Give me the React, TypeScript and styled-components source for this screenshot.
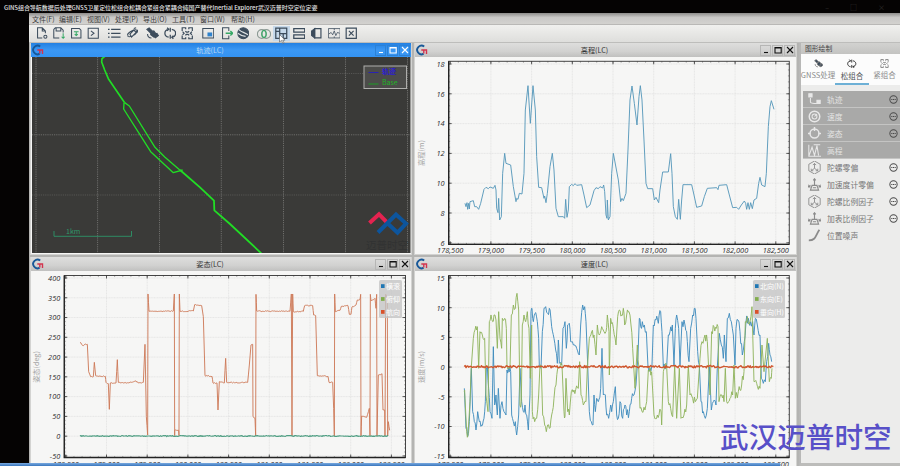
import React from 'react';
import styled, { createGlobalStyle } from 'styled-components';

const sans = `"Noto Sans CJK SC", "Noto Sans", sans-serif`;

const Global = createGlobalStyle`
  * { box-sizing: border-box; }
  body { margin: 0; background: #050505; font-family: ${sans}; overflow: hidden; }
  svg { display: block; }
`;

const Screen = styled.div`
  width: 900px; height: 466px; background: #050303; overflow: hidden; position: relative;
  display: flex; flex-direction: column;
`;
const TitleBar = styled.header`
  height: 13px; flex: none; display: flex; justify-content: space-between;
  padding: 3px 15px 0 4px; color: #e2e2e2; font-size: 6px; line-height: 9px; white-space: nowrap;
`;
const Caption = styled.span`letter-spacing: -0.04px; font-weight: 500;`;
const CaptionButtons = styled.span`display: flex; gap: 21px; color: #33302f; font-size: 7px;`;
const AppShell = styled.div`
  margin-left: 29px; width: 871px; height: 453px; background: #ececea;
  display: grid; grid-template-rows: 12px 18px 423px;
`;
const MenuBar = styled.nav`
  background: linear-gradient(#8d8c8a, #c9c8c6 40%, #d3d2cf); border-bottom: 1px solid #b9b8b6;
  display: flex; padding-left: 3px; font-size: 7px; line-height: 12px; color: #3b3b3b;
`;
const MenuItem = styled.span<{ $w: number }>`width: ${p => p.$w}px; white-space: nowrap;`;
const ToolBar = styled.div`
  background: linear-gradient(#f0f0ee, #dededc); border-bottom: 1px solid #bdbdbb;
  display: flex; align-items: center; padding-left: 4.5px;
`;
const Tool = styled.span<{ $gap?: number; $active?: boolean }>`
  width: 17.5px; height: 15px; margin-left: ${p => p.$gap ?? 0}px; display: grid; place-items: center;
  background: ${p => (p.$active ? '#c5d8ea' : 'transparent')};
`;
const Main = styled.div`display: grid; grid-template-columns: 770px 101px;`;
const Desktop = styled.div`
  background: #b4b4b2; display: grid; grid-template-columns: 382px 383px; grid-template-rows: 212px 211px;
  column-gap: 2px; row-gap: 2px; padding-left: 1px; height: 423px; overflow: hidden;
`;
const Win = styled.section`
  background: #f6f6f5; border: 1px solid #d3d3d1; border-top: 0; overflow: hidden;
  display: flex; flex-direction: column;
`;
const WinBar = styled.div<{ $active?: boolean }>`
  height: 14px; flex: none; display: grid; grid-template-columns: 14px 1fr 36px; align-items: center;
  background: ${p => (p.$active ? 'linear-gradient(#2380e2, #3b98f4 50%, #3493f2)' : 'linear-gradient(#dededd, #d1d1d0 60%, #c0c0bf)')};
  color: ${p => (p.$active ? '#b9d8f4' : '#333')}; font-size: 7.2px; line-height: 13px;
`;
const WinTitle = styled.span`text-align: center;`;
const WinButtons = styled.span`display: flex; gap: 1px;`;
const WinButton = styled.span<{ $active?: boolean }>`
  width: 11px; height: 11px; display: grid; place-items: center;
  border: 1px solid ${p => (p.$active ? '#2c81d6' : '#b6b6b5')}; color: ${p => (p.$active ? '#fff' : '#111')};
`;
const Side = styled.aside`
  background: #ececeb; border-left: 2px solid #b8b8b7; border-bottom: 3px solid #bcbcba; height: 423px;
`;
const SideTitle = styled.div`
  height: 11px; padding-left: 4px; font-size: 6.8px; line-height: 10px; color: #444;
  background: linear-gradient(#d2d2d0, #c3c3c1);
`;
const Tabs = styled.div`height: 31px; background: #fcfcfc; display: grid; grid-template-columns: 34px 34px 31px;`;
const Tab = styled.div<{ $on?: boolean }>`
  display: flex; flex-direction: column; align-items: center; padding-top: 5px;
  color: ${p => (p.$on ? '#4f5355' : '#8c8c8c')}; font-size: 7.5px; line-height: 13px; white-space: nowrap;
  border-bottom: ${p => (p.$on ? '2px solid #6db0d6' : '0')};
`;
const List = styled.div`margin: 6px 0 0 2px;`;
const Row = styled.div<{ $on?: boolean }>`
  height: 17px; display: grid; grid-template-columns: 24px 1fr 11px; align-items: center;
  background: ${p => (p.$on ? '#a9a9a8' : 'transparent')}; color: ${p => (p.$on ? '#e4e4e3' : '#777')};
  border-bottom: 1px solid ${p => (p.$on ? '#c4c4c3' : 'transparent')}; font-size: 7.8px; white-space: nowrap;
`;
const RowIcon = styled.span<{ $on?: boolean }>`padding-left: 5px; color: ${p => (p.$on ? '#e8e8e8' : '#8b8b8b')};`;
const More = styled.span`color: #4b4b4b;`;
const Watermark = styled.div`
  position: absolute; left: 720px; top: 416px; font-size: 28.6px; line-height: 40px;
  color: #5850c8; white-space: nowrap; font-weight: 500;
`;
const Progress = styled.div`
  position: absolute; left: 0; bottom: 0; width: 780px; height: 3px; background: linear-gradient(#79a9df, #3976bd);
`;
const Cursor = styled.svg`position: absolute; left: 279px; top: 34px;`;

type Pt = [number, number];
const parse = (s: string, dx = 0): Pt[] =>
  s.trim().split(/\s+/).map(p => { const [x, y] = p.split(',').map(Number); return [x + dx, y] as Pt; });

// Adds small repeatable noise to the gentle stretches of a series.
function roughen(src: Pt[], amp: number): Pt[] {
  let seed = 7;
  const rnd = () => { seed = (seed * 16807) % 2147483647; return seed / 2147483647 - 0.5; };
  const out: Pt[] = [];
  src.forEach(([x, y], i) => {
    out.push([x, y]);
    const n = src[i + 1];
    if (!n || Math.abs(n[1] - y) > 75) return;
    const k = Math.max(2, Math.round((n[0] - x) / 2.6));
    for (let j = 1; j < k; j++) out.push([x + ((n[0] - x) * j) / k, y + ((n[1] - y) * j) / k + rnd() * amp]);
  });
  return out;
}
const line = (p: Pt[]) => 'M' + p.map(q => q.map(v => v.toFixed(1)).join(',')).join('L');

const height = [
  ...parse(`165,490 168,500 171,488 173,508 176,490 178,507 180,485 190,482 194,500 200,500 206,508 212,490 222,448 228,442 235,446 240,441 250,445 255,436 258,450 260,505 264,518 266,475 269,540 274,530 278,400 284,340 288,370 302,375 310,440 318,485 320,475 324,478 328,460 336,462 342,400 346,210 354,137 361,250 369,137 376,210 380,350 386,442 395,443 402,475 404,468 408,488 412,460 420,380 427,340 432,390 438,505 445,530 460,530 464,535 467,478 471,532 475,510 478,440 485,433 490,437 495,431 500,436 515,434 522,465 530,503 540,495 552,452 558,443 565,446 570,440 578,444`),
  ...parse(`11,435 14,455 18,525 21,535 22,480 25,540 30,530 35,400 40,340 55,420 62,485 66,475 70,482 78,460 84,330 90,180 96,138 103,190 111,255 117,170 121,137 126,180 132,300 138,430 143,446 158,446 163,480 168,472 176,488 180,450 188,396 205,396 212,341 216,400 220,500 226,530 232,538 236,478 241,538 245,480 249,434 275,434 282,465 290,502 305,498 313,470 322,445 350,443 354,449 357,436 380,434 388,465 398,503 410,502 416,508 424,495 433,483 437,490 440,508 444,488 448,508 452,488 457,506 462,480 470,475 476,430 480,412 485,435 495,440 499,400 505,260 510,200 514,182 522,208`, 570),
];
const yaw = [
  ...parse(`150,262 155,268 160,272 165,268 172,268 176,350 182,365 190,365 193,322 197,362 210,364 226,364 228,382 235,386 238,463 241,384 258,384 262,314 265,382 280,384 305,382 318,378 325,384 340,382 345,268 349,485 353,540 354,117 357,169 430,168 433,117 434,542 434,526 446,526 447,542 448,117 450,169 490,168 494,149 515,152 520,185 525,362 546,364 549,384 561,384 564,465 568,380 583,384 587,310 590,382`),
  ...parse(`30,383 83,382 88,330 93,270 98,268 99,485 105,490 107,543 108,118 110,168 210,169 214,117 216,543 218,117 220,170 250,169 254,152 278,152 281,180 287,182 292,362 324,364 327,382 338,382 341,460 343,543 344,117 346,170 360,166 364,154 384,152 388,178 393,178 396,156 408,150 412,135 420,133 422,118 423,543 425,483 440,487 448,460 450,543 451,118 453,137 465,130 468,160 470,118 471,543 475,360 486,356 489,465 494,465 495,543 497,118 502,130 503,543 505,500 509,526`, 570),
];
const north = [
  ...parse(`163,400 168,520 173,545 178,500 184,340 188,470 193,500 198,525 203,470 208,500 215,510 222,490 226,440 229,340 232,335 236,400 240,470 246,490 250,275 254,450 258,420 262,480 265,400 270,490 276,440 282,470 288,480 291,345 295,338 302,350 305,480 310,500 316,500 320,540 326,480 330,340 335,440 340,470 345,450 350,480 355,525 360,420 363,170 366,160 370,200 375,175 382,200 386,250 388,335 393,340 397,230 402,160 407,155 413,175 418,160 425,215 432,250 437,285 442,325 445,255 448,325 455,330 459,220 465,200 469,280 473,210 478,205 482,260 490,270 500,280 508,300 512,210 518,150 524,155 528,200 532,300 538,470 544,500 549,510 552,420 556,470 560,430 565,440 572,400 576,280 580,420 586,420 590,480 596,490`),
  ...parse(`32,450 35,470 40,440 46,395 50,480 55,490 60,440 68,490 75,450 80,480 88,470 95,430 102,420 108,390 114,300 118,190 122,215 127,200 133,210 139,230 144,335 150,340 156,330 160,210 168,195 175,205 182,170 186,230 190,335 200,335 205,240 210,230 217,210 222,330 226,220 230,180 236,220 240,330 246,200 255,210 262,260 267,320 272,220 278,180 283,160 288,190 293,290 298,330 303,440 310,470 316,490 322,460 328,335 334,465 340,440 348,450 352,335 358,235 364,270 370,310 373,240 378,320 382,190 388,175 394,200 400,240 405,330 408,220 414,195 420,230 427,300 433,260 438,200 445,190 452,200 458,200 462,240 466,190 472,210 480,240 484,370 490,385 496,380 500,320 506,265 510,300 515,320`, 570),
];
const east = [
  ...parse(`163,410 165,430 170,530 174,540 180,440 184,335 190,250 195,225 202,215 206,340 210,230 217,240 224,250 228,420 234,470 238,200 243,180 248,200 252,180 258,195 262,280 266,170 270,250 275,280 277,190 284,190 289,220 291,335 300,340 304,180 310,150 316,160 321,115 326,165 330,450 334,440 337,210 342,180 347,200 352,170 357,220 361,370 365,210 367,470 374,500 380,490 386,420 390,330 394,340 398,480 404,510 409,530 413,510 418,520 425,480 432,430 438,390 443,340 456,330 462,470 465,485 468,370 473,470 478,480 484,410 492,405 505,400 509,320 513,420 520,450 528,440 532,340 538,250 545,230 552,240 558,300 562,210 568,240 575,215 582,230 588,230 592,180 597,230`),
  ...parse(`28,360 32,190 40,220 48,270 53,185 58,165 65,180 70,160 74,210 80,180 87,170 93,210 98,280 105,400 112,270 116,330 120,460 126,470 135,465 140,440 145,345 155,350 162,480 172,480 182,465 185,510 190,350 200,335 205,440 212,460 218,485 224,330 230,490 238,340 243,490 252,480 260,450 265,330 270,420 278,430 286,440 292,430 300,310 306,260 315,240 322,260 330,420 335,230 342,215 354,215 357,440 365,420 372,440 376,340 380,440 390,430 398,420 402,330 406,430 415,410 425,390 432,350 436,200 442,185 450,200 456,155 462,380 470,385 480,400 486,270 492,350 502,250 508,380 514,370 516,340`, 570),
];

const xLabels = ['178,500', '179,000', '179,500', '180,000', '180,500', '181,000', '181,500', '182,000', '182,500'];

interface PlotProps {
  view: string; w: number; h: number; left: number; right: number; top: number; bottom: number;
  x0: number; xs: number; y0: number; ys: number; labels: string[]; unit: string; unitX: number; unitY: number;
  origin: string; children: React.ReactNode; legend?: React.ReactNode;
}
function Plot(p: PlotProps) {
  const xs = xLabels.map((_, i) => p.x0 + p.xs * i);
  const ys = p.labels.map((_, i) => p.y0 + p.ys * i);
  const minor = (start: number, step: number, n: number) =>
    Array.from({ length: (n - 1) * 5 + 1 }, (_, i) => start + (step * i) / 5);
  return (
    <svg width={p.w} height={p.h} viewBox={p.view} fontFamily='"Open Sans", "Noto Sans", sans-serif'>
      <g stroke="#dadada" strokeWidth=".6" strokeDasharray="1 .6">
        {xs.map(x => <path key={x} d={`M${x},${p.top}V${p.bottom}`} />)}
        {ys.map(y => <path key={y} d={`M${p.left},${y}H${p.right}`} />)}
      </g>
      <rect x={p.left} y={p.top} width={p.right - p.left} height={p.bottom - p.top} fill="none" stroke="#444" strokeWidth="1" />
      <path d={`M${p.left},${p.top}V${p.bottom}H${p.right}`} fill="none" stroke="#222" strokeWidth="1.3" />
      <g stroke="#333" strokeWidth=".8">
        {xs.map(x => <path key={x} d={`M${x},${p.bottom}v-3M${x},${p.top}v3`} />)}
        {ys.map(y => <path key={y} d={`M${p.left},${y}h3M${p.right},${y}h-3`} />)}
        {minor(p.x0, p.xs, 9).map(x => <path key={'m' + x} strokeWidth=".4" d={`M${x},${p.bottom}v-1.4M${x},${p.top}v1.4`} />)}
        {minor(p.y0, p.ys, p.labels.length).map(y => <path key={'n' + y} strokeWidth=".4" d={`M${p.left},${y}h1.4M${p.right},${y}h-1.4`} />)}
      </g>
      <g fontSize="7.4" fontStyle="italic" fill="#2b2b2b">
        {ys.map((y, i) => <text key={i} x={p.left - 4} y={y + 2.8} textAnchor="end">{p.labels[i]}</text>)}
        {xs.map((x, i) => <text key={i} x={x} y={p.bottom + 9} textAnchor="middle">{xLabels[i]}</text>)}
      </g>
      <text transform={`translate(${p.unitX},${p.unitY}) rotate(-90)`} textAnchor="middle" fontSize="7.2" fill="#a4a4a4" fontFamily={sans}>{p.unit}</text>
      <g transform={`translate(${p.origin}) scale(.33333)`} fill="none" strokeWidth="2.8" strokeLinejoin="round">{p.children}</g>
      {p.legend}
    </svg>
  );
}
function Legend({ x, w, items }: { x: number; w: number; items: string[] }) {
  const colors = ['#1f77b4', '#82ad4d', '#d9522b'];
  return (
    <g fontFamily={sans} fontSize="7">
      <rect x={x} y="280" width={w} height="38" rx="1.5" fill="#c4c4c4" fillOpacity=".78" />
      {items.map((t, i) => (
        <g key={t}>
          <rect x={x + 2} y={284.2 + i * 12.9} width="3.6" height="3.8" fill={colors[i]} />
          <text x={x + 7} y={288.8 + i * 12.9} fill="#fff">{t}</text>
        </g>
      ))}
    </g>
  );
}

function TrackMap() {
  return (
    <svg width="380" height="196" viewBox="31 57 380 196">
      <rect x="32" y="57" width="378.5" height="196" fill="#3a3a38" />
      <g stroke="#7b7b79" strokeWidth=".8" strokeDasharray="1.2 1">
        {[36, 97.6, 159.5, 221.3, 283.5, 345.5, 407.5].map(x => <path key={x} d={`M${x},57V253`} />)}
        {[73.5, 134.8, 195].map((y, i) => <path key={y} opacity={i === 1 ? 1 : 0.55} d={`M32,${y}H410`} />)}
      </g>
      <g transform="translate(30,40) scale(.33333)" fill="none" stroke="#21dd25" strokeLinejoin="round">
        <path strokeWidth="5" d="M226,48L216,56L215,66L224,90L235,116L284,188" />
        <path strokeWidth="4" d="M284,188L298,198L375,322L405,352L452,392M282,188L281,207L362,335L430,398L458,390" />
        <path strokeWidth="5.4" d="M450,390L510,442L552,482L553,511L600,552L694,640" />
      </g>
      <path d="M54,231V236.3H131.5V231" fill="none" stroke="#2d9469" strokeWidth=".9" />
      <text x="66" y="233.5" fontSize="7" fill="#2f9b6b" fontFamily={sans}>1km</text>
      <rect x="364" y="66" width="42.5" height="22.5" fill="#4c4c4a" stroke="#aeaeac" strokeWidth="1" />
      <path d="M368.5,72.5h10" stroke="#2a22b4" />
      <path d="M368.5,84h10" stroke="#1d9c24" />
      <g fontSize="7" fontFamily={sans}>
        <text x="382" y="73.5" fill="#2c20d0" fontWeight="700">轨迹</text>
        <text x="382" y="85" fill="#1fb326">Base</text>
        <text x="366" y="249" fontSize="10.5" fill="#313232" textLength="42">迈普时空</text>
      </g>
      <path d="M369.5,223L379,214.2L387.5,223" fill="none" stroke="#e42350" strokeWidth="4" />
      <path d="M378,232.5L396,214.6L406,223.6L397.5,232.6L387.5,223.2" fill="none" stroke="#0d559d" strokeWidth="4" />
    </svg>
  );
}

const Logo = () => (
  <svg width="13" height="12" viewBox="0 0 13 12" fill="none">
    <path d="M9.2 2.6A4.3 4.3 0 1 0 8.6 9.7" stroke="#185898" strokeWidth="1.9" />
    <path d="M6.3 6h5.2v4M8.8 6v3.4" stroke="#d3344e" strokeWidth="1.4" />
  </svg>
);

function SubWindow({ title, active, children }: { title: string; active?: boolean; children: React.ReactNode }) {
  return (
    <Win>
      <WinBar $active={active}>
        <Logo />
        <WinTitle>{title}</WinTitle>
        <WinButtons>
          {['M2 6.5h4', 'M1 1.5h6.2v5.5H1zM1 2h6', 'M1 1l6 6M7 1L1 7'].map(d => (
            <WinButton key={d} $active={active}>
              <svg width="8" height="8" viewBox="0 0 8 8"><path d={d} fill="none" stroke="currentColor" strokeWidth="1.1" /></svg>
            </WinButton>
          ))}
        </WinButtons>
      </WinBar>
      {children}
    </Win>
  );
}

const dark = '#3c4c5c';
const green = '#36a865';
const glyphs: Record<string, React.ReactNode> = {
  newFile: <><path d="M8 14H2V1h6l4 4v3M8 1v4h4" /><circle cx="12" cy="12.5" r="2" /></>,
  open: <><path d="M8 14H1V3l2-2h7l3 3v3M4 1v4h6V1" /><path stroke={green} d="M13 8v6.5M11 12.5l2 2 2-2" /></>,
  save: <><path d="M2 2h10l2 2v10H2zM5 2h6" /><path stroke={green} d="M5 6h6M8 6v5M6 9l2 2 2-2" /></>,
  console: <><path d="M1.5 1.5h13v13h-13z" /><path d="M5 5l4 3-4 3" /></>,
  list: <path strokeWidth="1.6" d="M0 3h2M4 3h12M0 8h2M4 8h12M0 13h2M4 13h12" />,
  orbit: <path strokeWidth="1.4" d="M3 11c-4-2 7-9 11-7 3 1-1 4-3 5M13 5c3 3-7 9-11 7M5 9l5-5 3 3-6 6zM10 2l3-1" />,
  sat: <><path fill={dark} d="M1 3l3-2 4 4-3 2zM6 6l4-1 3 4-3 4-4-3zM11 9l3-1 2 3-4 3-2-2z" /><path d="M2 9c0 3 2 5 5 5" /></>,
  loose: <path strokeWidth="1.6" d="M6 3C-.5 4-.5 12 6 13M10 3c6.500 1 6.500 9 0 10M8 1v5M8 10v5M4 1l2 2-2 2M12 15l-2-2 2-2" />,
  tight: <path strokeWidth="1.5" d="M1.500 5V1H6v2M10 3V1h4.500v4M1.500 11v4H6v-2M10 13v2h4.500v-4M2 6l2 2-2 2M14 6l-2 2 2 2M5.500 5.500l1.500 1h2l1.500-1M5.500 10.500l1.500-1h2l1.500 1" />,
  view: <><path d="M1 2h14v12H1z" /><path fill="#2f82cd" stroke="none" d="M7 7h6v5H7z" /></>,
  exit: <><path d="M10 5V1H2v14h8v-4" /><path stroke={green} strokeWidth="1.7" d="M6 8h9M12 5l3 3-3 3" /></>,
  earth: <><circle cx="8" cy="8" r="7" fill={dark} /><path stroke="#dfe3e5" strokeWidth="1.5" d="M2 3c4 4 8 4 12 7M1 8c4 3 7 4 10 4" /></>,
  rings: <><circle cx="5.5" cy="8" r="5" /><circle cx="10.500" cy="8" r="5" /><ellipse stroke={green} cx="8" cy="8" rx="2.5" ry="4" /></>,
  tiles: <path strokeWidth="1.6" d="M1 1.500h14v13H1zM6 1.500v13M6 8.500h9M10.500 8.500v6M1 5.500h5" />,
  rows: <path strokeWidth="1.6" d="M1 2h14v4.5H1zM1 10h14v4.5H1z" />,
  side: <><path strokeWidth="1.5" d="M6 2h8v12H6z" /><path fill={dark} d="M6 2L2 5v6l4 3z" /></>,
  wave: <path strokeWidth="1" d="M0.500 2h15v12h-15zM1 9l3-2 2 3 2-5 2 6 2-4 3 1M8 2v2M8 12v2" />,
  close: <><path strokeWidth="1.5" d="M1.500 1.500h13v13h-13z" /><path strokeWidth="1.5" d="M5 5l6 6M11 5l-6 6" /></>,
  route: <><path d="M3 6v5c0 2 3 2 8 2" /><path fill="currentColor" d="M1 1h4v4H1zM11 9h4v4h-4z" /></>,
  gauge: <><circle cx="8" cy="8" r="6.5" strokeWidth="1.8" /><circle cx="8" cy="8" r="3" /><path d="M8 8l3-3" /></>,
  attitude: <><circle cx="8" cy="8" r="5.5" strokeWidth="1.8" /><path strokeWidth="1.8" d="M8 0v5M0 8h3M13 8h3" /></>,
  alt: <path strokeWidth="1.3" d="M1 15L5 4l3 10 3-12 2 12M1 1v14h15M7 1h8" />,
  gyro: <path strokeWidth="1.1" d="M8 0l7 4v8l-7 4-7-4V4zM8 3v6l-4 3M8 9l4 3M6 5l2-2 2 2M4 9.500V12h2.500M12 9.500V12H9.500" />,
  accel: <path strokeWidth="1.4" d="M3 15l2-6h6l2 6zM8 9V1M6.500 3L8 1l1.500 2M3 9L0 11M13 9l3 2M0 8v3h3M16 8v3h-3M6 12h4" />,
  curve: <path strokeWidth="2.2" d="M1 14c9 0 8-6 13-13" />,
  more: <><circle cx="8" cy="8" r="6.5" strokeWidth="1.8" /><path strokeWidth="2" d="M4 8h2M7 8h2M10 8h2" /></>,
};
const Icon = ({ name, size = 12.5, color = dark }: { name: string; size?: number; color?: string }) => (
  <svg width={size} height={size} viewBox="0 0 16 16" fill="none" stroke={color} strokeWidth="1.3">{glyphs[name]}</svg>
);

const menus: [string, number][] = [['文件(F)', 27], ['编辑(E)', 28], ['视图(V)', 28], ['处理(P)', 28], ['导出(O)', 29], ['工具(T)', 28], ['窗口(W)', 31], ['帮助(H)', 30]];
const tools: [string, number][] = [['newFile', 0], ['open', -0.5], ['save', -0.5], ['console', -0.2], ['list', 3.5], ['orbit', -0.3], ['sat', 3.2], ['loose', 0], ['tight', 0], ['view', 3.2], ['exit', 1.5], ['earth', -1.5], ['rings', 3], ['tiles', 0.2], ['rows', 0], ['side', 0], ['wave', 0], ['close', 0]];
const rows: [string, string, boolean, boolean][] = [
  ['route', '轨迹', true, true], ['gauge', '速度', true, true], ['attitude', '姿态', true, true], ['alt', '高程', true, false],
  ['gyro', '陀螺零偏', false, true], ['accel', '加速度计零偏', false, true], ['gyro', '陀螺比例因子', false, true],
  ['accel', '加表比例因子', false, true], ['curve', '位置噪声', false, false],
];

export default function App() {
  const flat = roughen(Array.from({ length: 46 }, (_, i) => [163 + i * 20.6, 335] as Pt), 7);
  const zero = roughen(Array.from({ length: 46 }, (_, i) => [150 + i * 20.6, 543] as Pt), 3);
  return (
    <Screen>
      <Global />
      <TitleBar>
        <Caption>GINS组合导航数据后处理GNSS卫星定位松组合松耦合紧组合紧耦合纯国产替代Inertial Explorer武汉迈普时空定位定姿</Caption>
        <CaptionButtons><span>–</span><span>□</span><span>×</span></CaptionButtons>
      </TitleBar>
      <AppShell>
        <MenuBar>{menus.map(([t, w]) => <MenuItem key={t} $w={w}>{t}</MenuItem>)}</MenuBar>
        <ToolBar>{tools.map(([n, g]) => <Tool key={n} $gap={g} $active={n === 'tiles'}><Icon name={n} size={n === 'rings' ? 14 : 12.5} color={n === 'rings' ? '#8b9993' : dark} /></Tool>)}</ToolBar>
        <Main>
          <Desktop>
            <SubWindow title="轨迹(LC)" active><TrackMap /></SubWindow>
            <SubWindow title="高程(LC)">
              <Plot view="415 57 381 197" w={381} h={197} left={448.7} right={789.3} top={61.3} bottom={244.3}
                x0={450.2} xs={40.7} y0={64} ys={29.8} labels={['18', '16', '14', '12', '10', '8', '6']}
                unit="高程(m)" unitX={423.5} unitY={153} origin="410,40">
                <path d={line(height)} stroke="#5698ba" />
              </Plot>
            </SubWindow>
            <SubWindow title="姿态(LC)">
              <Plot view="31 271 380 196" w={380} h={196} left={64.3} right={405.5} top={275.5} bottom={457.5}
                x0={65.8} xs={40.7} y0={278} ys={19.77} labels={['400', '350', '300', '250', '200', '150', '100', '50', '0', '-50']}
                unit="姿态(deg)" unitX={39} unitY={367} origin="30,255"
                legend={<Legend x={379} w={23} items={['横滚', '俯仰', '航向']} />}>
                <path d={line(roughen(yaw, 3))} stroke="#cd7a58" />
                <path d={line(zero.slice(0, -1))} stroke="#4f9f83" strokeWidth="3.6" />
              </Plot>
            </SubWindow>
            <SubWindow title="速度(LC)">
              <Plot view="415 271 381 196" w={381} h={196} left={448.7} right={789.3} top={275.5} bottom={457.5}
                x0={450.2} xs={40.7} y0={278} ys={29.7} labels={['15', '10', '5', '0', '-5', '-10', '-15']}
                unit="速度(m/s)" unitX={423.5} unitY={367} origin="410,255"
                legend={<Legend x={753} w={32} items={['北向(N)', '东向(E)', '垂向(H)']} />}>
                <path d={line(roughen(north, 30))} stroke="#3f8cbd" />
                <path d={line(roughen(east, 28))} stroke="#8fb45c" />
                <path d={line(flat)} stroke="#cf562d" strokeWidth="4.2" />
              </Plot>
            </SubWindow>
          </Desktop>
          <Side>
            <SideTitle>图形绘制</SideTitle>
            <Tabs>
              <Tab><Icon name="sat" size={9} color="#777" />GNSS处理</Tab>
              <Tab $on><Icon name="loose" size={9.5} color="#333" />松组合</Tab>
              <Tab><Icon name="tight" size={9} color="#777" />紧组合</Tab>
            </Tabs>
            <List>
              {rows.map(([icon, text, on, more]) => (
                <Row key={text} $on={on}>
                  <RowIcon $on={on}><Icon name={icon} size={13} color="currentColor" /></RowIcon>
                  <span>{text}</span>
                  <More>{more && <Icon name="more" size={9} color="currentColor" />}</More>
                </Row>
              ))}
            </List>
          </Side>
        </Main>
      </AppShell>
      <Cursor width="7" height="10" viewBox="0 0 7 10"><path d="M.5.5v7.5l2-1.6 1.3 3 1.2-.6-1.3-2.7H6z" fill="#fff" stroke="#555" strokeWidth=".6" /></Cursor>
      <Progress />
      <Watermark>武汉迈普时空</Watermark>
    </Screen>
  );
}
